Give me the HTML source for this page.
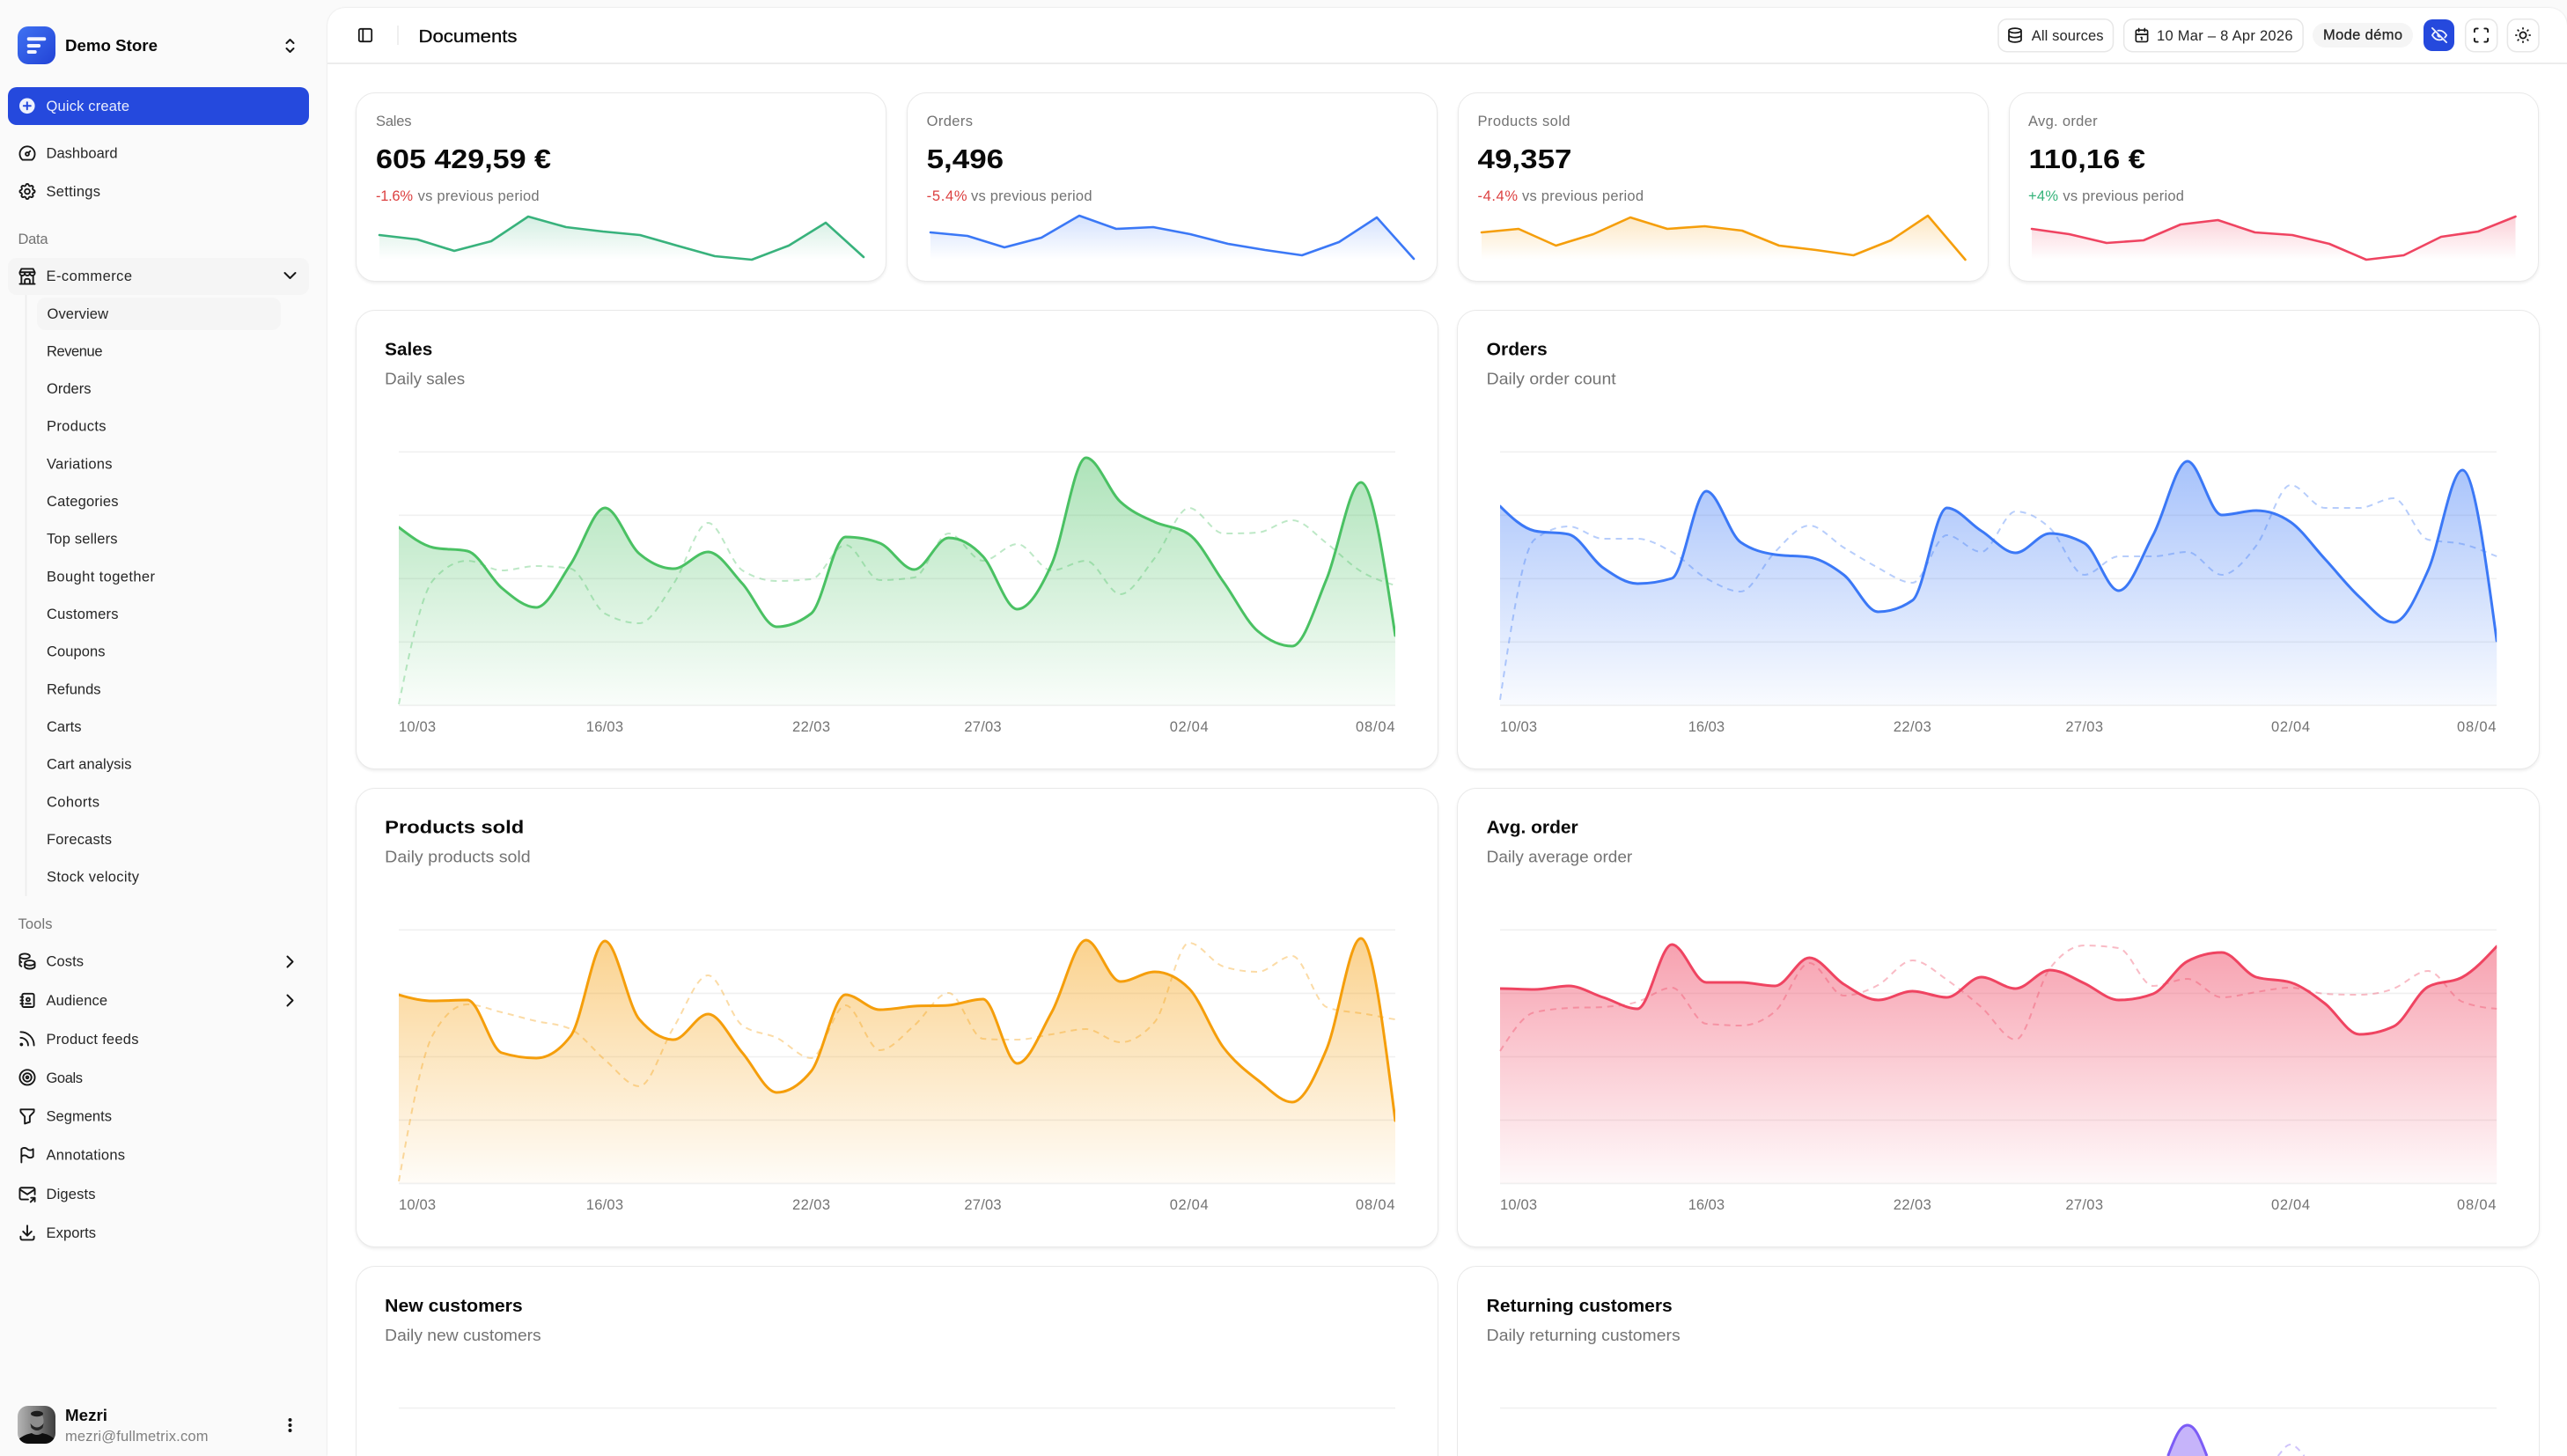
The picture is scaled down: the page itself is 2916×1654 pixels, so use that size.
<!DOCTYPE html>
<html lang="en"><head><meta charset="utf-8"><title>Documents</title>
<style>
html,body{margin:0;padding:0;width:2916px;height:1654px;overflow:hidden;background:#fafafa}
#app{position:absolute;left:0;top:0;width:2916px;height:1654px;overflow:hidden;background:#fafafa}
.main{position:absolute;left:372px;top:9px;width:2544px;height:1645px;background:#fff;border-radius:20px 20px 0 0;box-shadow:0 0 2px rgba(0,0,0,.12)}
.hl{position:absolute;left:372px;top:71px;width:2544px;height:2px;background:#ececec}
.c{position:absolute;box-sizing:border-box;background:#fff;border:1.5px solid #e9e9e9;border-radius:22px;box-shadow:0 2px 3px rgba(0,0,0,.07)}
.k{top:105px;height:215px;width:602.5px}
.b{height:521.5px;width:1230px}
.e{height:216px;border-bottom:0;border-radius:22px 22px 0 0;box-shadow:none}
svg{position:absolute;left:0;top:0;display:block;width:2916px;height:1654px;overflow:hidden}
text{font-family:"Liberation Sans",sans-serif;font-size:16.5px;fill:#262626}
.g{fill:#737373}
.n{font-size:31px;font-weight:700;fill:#0a0a0a}
.h{font-size:20.5px;font-weight:700;fill:#0a0a0a}
.s{font-size:18.5px;fill:#737373}
.m{stroke:#171717;stroke-width:.25}
.i{fill:none;stroke:#171717;stroke-width:2;stroke-linecap:round;stroke-linejoin:round}
.v{vector-effect:non-scaling-stroke}
.l{stroke-width:3;stroke-linejoin:round}
.d{fill:none;stroke-width:2;stroke-dasharray:7 6;opacity:.36}
.gr{stroke:#f0f0f0;stroke-width:1.6}
.sp{fill:none;stroke-width:2.6;stroke-linejoin:round;stroke-linecap:round}
</style></head><body>
<div id="app">
<div class="main"></div><div class="hl"></div>
<div class="c k" style="left:404px;width:603px"></div><div class="c k" style="left:1030.3px"></div><div class="c k" style="left:1656px"></div><div class="c k" style="left:2281.5px"></div>
<div class="c b" style="left:404px;top:352px"></div><div class="c b" style="left:1655px;top:352px;width:1229.5px"></div>
<div class="c b" style="left:404px;top:895px"></div><div class="c b" style="left:1655px;top:895px;width:1229.5px"></div>
<div class="c b e" style="left:404px;top:1438px"></div><div class="c b e" style="left:1655px;top:1438px;width:1229.5px"></div>
<svg width="2916" height="1654" viewBox="0 0 2916 1654" xmlns="http://www.w3.org/2000/svg">
<defs>
<linearGradient id="lg" x1="0" y1="0" x2="1" y2="1"><stop offset="0" stop-color="#3f72f2"/><stop offset="1" stop-color="#2243d6"/></linearGradient>
<linearGradient id="av" x1="0" y1="0" x2="1" y2="0"><stop offset="0" stop-color="#b5b5b5"/><stop offset=".55" stop-color="#777"/><stop offset="1" stop-color="#3c3c3c"/></linearGradient>
<clipPath id="avc"><rect x="20" y="1597" width="43" height="43" rx="12"/></clipPath>
<linearGradient id="ag" gradientUnits="userSpaceOnUse" x1="0" x2="0" y1="520" y2="801"><stop offset="0" stop-color="#4ac163" stop-opacity=".45"/><stop offset="1" stop-color="#4ac163" stop-opacity=".03"/></linearGradient>
<linearGradient id="ab" gradientUnits="userSpaceOnUse" x1="0" x2="0" y1="524" y2="801"><stop offset="0" stop-color="#3b78f6" stop-opacity=".45"/><stop offset="1" stop-color="#3b78f6" stop-opacity=".03"/></linearGradient>
<linearGradient id="aa" gradientUnits="userSpaceOnUse" x1="0" x2="0" y1="1066" y2="1344"><stop offset="0" stop-color="#f59e0b" stop-opacity=".46"/><stop offset="1" stop-color="#f59e0b" stop-opacity=".03"/></linearGradient>
<linearGradient id="ar" gradientUnits="userSpaceOnUse" x1="0" x2="0" y1="1073" y2="1344"><stop offset="0" stop-color="#ef4461" stop-opacity=".5"/><stop offset="1" stop-color="#ef4461" stop-opacity=".03"/></linearGradient>
<linearGradient id="sg" x1="0" y1="0" x2="0" y2="1"><stop offset="0" stop-color="#38b27c" stop-opacity=".22"/><stop offset="1" stop-color="#38b27c" stop-opacity="0"/></linearGradient>
<linearGradient id="sb" x1="0" y1="0" x2="0" y2="1"><stop offset="0" stop-color="#3b78f6" stop-opacity=".22"/><stop offset="1" stop-color="#3b78f6" stop-opacity="0"/></linearGradient>
<linearGradient id="sa" x1="0" y1="0" x2="0" y2="1"><stop offset="0" stop-color="#f59e0b" stop-opacity=".25"/><stop offset="1" stop-color="#f59e0b" stop-opacity="0"/></linearGradient>
<linearGradient id="sr" x1="0" y1="0" x2="0" y2="1"><stop offset="0" stop-color="#ef4461" stop-opacity=".25"/><stop offset="1" stop-color="#ef4461" stop-opacity="0"/></linearGradient>
<clipPath id="c1"><rect x="0" y="0" width="87" height="801"/></clipPath>
<clipPath id="c2"><rect x="0" y="0" width="87" height="1344"/></clipPath>
<clipPath id="c3"><rect x="0" y="0" width="87" height="1654"/></clipPath>
</defs>

<!-- sidebar header -->
<rect x="20" y="30" width="43" height="43" rx="12" fill="url(#lg)"/>
<rect x="30.7" y="42.3" width="21.6" height="4" rx="2" fill="#f3f5ff"/><rect x="30.7" y="50" width="15.4" height="4" rx="2" fill="#f3f5ff"/><rect x="30.7" y="57" width="11" height="4" rx="2" fill="#f3f5ff"/>
<text x="74" y="58" textLength="105" lengthAdjust="spacingAndGlyphs" style="font-size:18px;font-weight:700;fill:#0a0a0a">Demo Store</text>
<g class="i" transform="translate(317.5,40)"><path d="M8 9l4 -4l4 4M16 15l-4 4l-4 -4"/></g>

<rect x="9" y="99" width="342" height="43" rx="10" fill="#2549dd"/>
<circle cx="30.8" cy="120.3" r="8.8" fill="#eef1fd"/><path d="M30.8 116.3v8M26.8 120.3h8" stroke="#2549dd" stroke-width="2" stroke-linecap="round"/>
<text x="52.5" y="126" textLength="94.5" style="fill:#e9edfc">Quick create</text>

<g class="i" transform="translate(19.6,162.6) scale(.95)"><path d="M12 13m-2 0a2 2 0 1 0 4 0a2 2 0 1 0 -4 0M13.45 11.55l2.05 -2.05M6.4 20a9 9 0 1 1 11.2 0z"/></g>
<text x="52.5" y="179.5" textLength="81">Dashboard</text>
<g class="i" transform="translate(19.6,206.1) scale(.95)"><path d="M10.325 4.317c.426 -1.756 2.924 -1.756 3.35 0a1.724 1.724 0 0 0 2.573 1.066c1.543 -.94 3.31 .826 2.37 2.37a1.724 1.724 0 0 0 1.065 2.572c1.756 .426 1.756 2.924 0 3.35a1.724 1.724 0 0 0 -1.066 2.573c.94 1.543 -.826 3.31 -2.37 2.37a1.724 1.724 0 0 0 -2.572 1.065c-.426 1.756 -2.924 1.756 -3.35 0a1.724 1.724 0 0 0 -2.573 -1.066c-1.543 .94 -3.31 -.826 -2.37 -2.37a1.724 1.724 0 0 0 -1.065 -2.572c-1.756 -.426 -1.756 -2.924 0 -3.35a1.724 1.724 0 0 0 1.066 -2.573c-.94 -1.543 .826 -3.31 2.37 -2.37c1 .608 2.296 .07 2.572 -1.065z"/><circle cx="12" cy="12" r="3"/></g>
<text x="52.5" y="223" textLength="61.5">Settings</text>

<text class="g" x="20.5" y="277" textLength="34">Data</text>
<rect x="9" y="293" width="342" height="42" rx="10" fill="#f5f5f5"/>
<g class="i" transform="translate(19.6,302.6) scale(.95)"><path d="M3 21l18 0M3 7v1a3 3 0 0 0 6 0v-1m0 1a3 3 0 0 0 6 0v-1m0 1a3 3 0 0 0 6 0v-1h-18l2 -4h14l2 4M5 21l0 -10.15M19 21l0 -10.15M9 21v-4a2 2 0 0 1 2 -2h2a2 2 0 0 1 2 2v4"/></g>
<text x="52.5" y="319" textLength="97.5">E-commerce</text>
<g class="i" transform="translate(317.5,301)"><path d="M6 9l6 6l6 -6"/></g>
<rect x="28.7" y="335" width="1.6" height="683" fill="#ececec"/>
<rect x="42" y="338" width="277" height="37" rx="10" fill="#f5f5f5"/>
<text x="53.5" y="362" textLength="69.5">Overview</text>
<text x="53" y="404.5" textLength="63.5">Revenue</text>
<text x="53" y="447" textLength="50.5">Orders</text>
<text x="53" y="489.5" textLength="67.5">Products</text>
<text x="53" y="532.5" textLength="74.5">Variations</text>
<text x="53" y="575" textLength="81.5">Categories</text>
<text x="53" y="617.5" textLength="80.5">Top sellers</text>
<text x="53" y="660.3" textLength="123">Bought together</text>
<text x="53" y="703" textLength="81.5">Customers</text>
<text x="53" y="745.5" textLength="66.5">Coupons</text>
<text x="53" y="788.3" textLength="61.5">Refunds</text>
<text x="53" y="831" textLength="39.5">Carts</text>
<text x="53" y="873.5" textLength="96.5">Cart analysis</text>
<text x="53" y="916.3" textLength="60">Cohorts</text>
<text x="53" y="959" textLength="74">Forecasts</text>
<text x="53" y="1001.5" textLength="105">Stock velocity</text>

<text class="g" x="20.5" y="1055" textLength="39">Tools</text>
<g class="i" transform="translate(19.6,1080.6) scale(.95)"><path d="M9 14c0 1.657 2.686 3 6 3s6 -1.343 6 -3s-2.686 -3 -6 -3s-6 1.343 -6 3zM9 14v4c0 1.656 2.686 3 6 3s6 -1.344 6 -3v-4M3 6c0 1.072 1.144 2.062 3 2.598s4.144 .536 6 0c1.856 -.536 3 -1.526 3 -2.598c0 -1.072 -1.144 -2.062 -3 -2.598s-4.144 -.536 -6 0c-1.856 .536 -3 1.526 -3 2.598zM3 6v10c0 .888 .772 1.45 2 2M3 11c0 .888 .772 1.45 2 2"/></g>
<text x="52.5" y="1097.7" textLength="42.5">Costs</text>
<g class="i" transform="translate(317.5,1080.5)"><path d="M9 6l6 6l-6 6"/></g>
<g class="i" transform="translate(19.6,1125) scale(.95)"><path d="M20 6v12a2 2 0 0 1 -2 2h-10a2 2 0 0 1 -2 -2v-12a2 2 0 0 1 2 -2h10a2 2 0 0 1 2 2zM10 16h6M13 11m-2 0a2 2 0 1 0 4 0a2 2 0 1 0 -4 0M4 8h3M4 12h3M4 16h3"/></g>
<text x="52.5" y="1141.8" textLength="69.5">Audience</text>
<g class="i" transform="translate(317.5,1124.5)"><path d="M9 6l6 6l-6 6"/></g>
<g class="i" transform="translate(19.6,1168.5) scale(.95)"><path d="M5 19m-1 0a1 1 0 1 0 2 0a1 1 0 1 0 -2 0M4 4a16 16 0 0 1 16 16M4 11a9 9 0 0 1 9 9"/></g>
<text x="52.5" y="1185.8" textLength="105">Product feeds</text>
<g class="i" transform="translate(19.6,1212.5) scale(.95)"><circle cx="12" cy="12" r="1.4"/><circle cx="12" cy="12" r="5"/><circle cx="12" cy="12" r="9"/></g>
<text x="52.5" y="1229.8" textLength="41.5">Goals</text>
<g class="i" transform="translate(19.6,1256.5) scale(.95)"><path d="M4 4h16v2.172a2 2 0 0 1 -.586 1.414l-4.414 4.414v7l-6 2v-8.5l-4.48 -4.928a2 2 0 0 1 -.52 -1.345v-2.227z"/></g>
<text x="52.5" y="1273.5" textLength="74.5">Segments</text>
<g class="i" transform="translate(19.6,1300.5) scale(.95)"><path d="M5 5a5 5 0 0 1 7 0a5 5 0 0 0 7 0v9a5 5 0 0 1 -7 0a5 5 0 0 0 -7 0v-9zM5 21v-7"/></g>
<text x="52.5" y="1317.5" textLength="89.5">Annotations</text>
<g class="i" transform="translate(19.6,1344.5) scale(.95)"><path d="M13 19h-8a2 2 0 0 1 -2 -2v-10a2 2 0 0 1 2 -2h14a2 2 0 0 1 2 2v6M3 7l9 6l9 -6M16 22l5 -5M21 21.5v-4.5h-4.5"/></g>
<text x="52.5" y="1361.8" textLength="56">Digests</text>
<g class="i" transform="translate(19.6,1388.5) scale(.95)"><path d="M4 17v2a2 2 0 0 0 2 2h12a2 2 0 0 0 2 -2v-2M7 11l5 5l5 -5M12 4l0 12"/></g>
<text x="52.5" y="1405.8" textLength="56.5">Exports</text>

<g clip-path="url(#avc)"><rect x="20" y="1597" width="43" height="43" fill="url(#av)"/>
<ellipse cx="42" cy="1614" rx="7.5" ry="10" fill="#8c8c8c"/><ellipse cx="42" cy="1606" rx="7" ry="3.2" fill="#1d1d1d"/><path d="M34.5 1617q7.5 9 15 0l-1 5q-6.5 6-13 0z" fill="#262626"/>
<path d="M20 1640v-4q6-6 16-8 6 4 12 0 10 2 15 8v4z" fill="#0e0e0e"/></g>
<text x="74" y="1614" textLength="48" lengthAdjust="spacingAndGlyphs" style="font-size:18px;font-weight:700;fill:#0a0a0a">Mezri</text>
<text x="74" y="1637" textLength="162.5" style="fill:#808080">mezri@fullmetrix.com</text>
<circle cx="329.5" cy="1613" r="2" fill="#171717"/><circle cx="329.5" cy="1619" r="2" fill="#171717"/><circle cx="329.5" cy="1625" r="2" fill="#171717"/>

<!-- header -->
<g class="i" transform="translate(404.2,29.2) scale(.9)"><path d="M4 4m0 2a2 2 0 0 1 2 -2h12a2 2 0 0 1 2 2v12a2 2 0 0 1 -2 2h-12a2 2 0 0 1 -2 -2zM9 4l0 16"/></g>
<rect x="451.3" y="29" width="1.4" height="22" fill="#e8e8e8"/>
<text x="475.5" y="48" textLength="112" lengthAdjust="spacingAndGlyphs" style="font-size:20.5px;fill:#0a0a0a;stroke:#0a0a0a;stroke-width:.3">Documents</text>

<rect x="2270" y="21.7" width="130.5" height="37" rx="10" fill="#fff" stroke="#e7e7e7" stroke-width="1.5"/>
<g class="i" transform="translate(2278.5,29.5) scale(.875)"><path d="M12 6m-8 0a8 3 0 1 0 16 0a8 3 0 1 0 -16 0M4 6v6a8 3 0 0 0 16 0v-6M4 12v6a8 3 0 0 0 16 0v-6"/></g>
<text x="2307.8" y="46" textLength="81.7">All sources</text>
<rect x="2412.6" y="21.7" width="203.5" height="37" rx="10" fill="#fff" stroke="#e7e7e7" stroke-width="1.5"/>
<g class="i" transform="translate(2423,30) scale(.83)"><path d="M4 7a2 2 0 0 1 2 -2h12a2 2 0 0 1 2 2v12a2 2 0 0 1 -2 2h-12a2 2 0 0 1 -2 -2v-12zM16 3v4M8 3v4M4 11h16M11 15h1M12 15v3"/></g>
<text x="2450" y="46" textLength="154.5">10 Mar – 8 Apr 2026</text>
<rect x="2627" y="26" width="114" height="28" rx="14" fill="#f5f5f5"/>
<text class="m" x="2639" y="45" textLength="90">Mode démo</text>
<rect x="2753" y="22" width="35" height="36" rx="10" fill="#2549dd"/>
<g class="i" transform="translate(2760.2,29.2) scale(.9)" style="stroke:#eef1fd"><path d="M10.585 10.587a2 2 0 0 0 2.829 2.828M16.681 16.673a8.717 8.717 0 0 1 -4.681 1.327c-3.6 0 -6.6 -2 -9 -6c1.272 -2.12 2.712 -3.678 4.32 -4.674m2.86 -1.146a9.055 9.055 0 0 1 1.82 -.18c3.6 0 6.6 2 9 6c-.666 1.11 -1.379 2.067 -2.138 2.87M3 3l18 18"/></g>
<rect x="2800.7" y="21.7" width="36" height="37" rx="10" fill="#fff" stroke="#e7e7e7" stroke-width="1.5"/>
<g class="i" transform="translate(2807.1,28.6) scale(.95)"><path d="M4 8v-2a2 2 0 0 1 2 -2h2M4 16v2a2 2 0 0 0 2 2h2M16 4h2a2 2 0 0 1 2 2v2M16 20h2a2 2 0 0 0 2 -2v-2"/></g>
<rect x="2848.4" y="21.7" width="35.6" height="37" rx="10" fill="#fff" stroke="#e7e7e7" stroke-width="1.5"/>
<g class="i" transform="translate(2855.2,29.2) scale(.9)"><path d="M12 12m-4 0a4 4 0 1 0 8 0a4 4 0 1 0 -8 0M3 12h1m8 -9v1m8 8h1m-9 8v1m-6.4 -15.4l.7 .7m12.1 -.7l-.7 .7m0 11.4l.7 .7m-12.1 -.7l-.7 .7"/></g>

<!-- KPI -->
<text class="g" x="427" y="143" textLength="40.5">Sales</text>
<text class="n" x="427" y="191" textLength="199" lengthAdjust="spacingAndGlyphs">605 429,59 €</text>
<text x="427" y="228" textLength="42" style="fill:#dc4040">-1.6%</text>
<text class="g" x="474.6" y="228" textLength="138">vs previous period</text>
<polygon fill="url(#sg)" points="431,267 474,272 516,285 558,274 600,246 643,258 685,263 727,267 769,279 812,291 854,295 896,279 938,253 981,292 981,295 431,295"/>
<polyline class="sp" stroke="#38b27c" points="431,267 474,272 516,285 558,274 600,246 643,258 685,263 727,267 769,279 812,291 854,295 896,279 938,253 981,292"/>

<text class="g" x="1052.6" y="143" textLength="52.4">Orders</text>
<text class="n" x="1052.6" y="191" textLength="87.5" lengthAdjust="spacingAndGlyphs">5,496</text>
<text x="1052.6" y="228" textLength="46" style="fill:#dc4040">-5.4%</text>
<text class="g" x="1103" y="228" textLength="137.5">vs previous period</text>
<polygon fill="url(#sb)" points="1057,264 1099,268 1141,281 1183,270 1226,245 1268,260 1310,258 1352,266 1395,277 1437,284 1479,290 1521,275 1564,247 1606,294 1606,295 1057,295"/>
<polyline class="sp" stroke="#3b78f6" points="1057,264 1099,268 1141,281 1183,270 1226,245 1268,260 1310,258 1352,266 1395,277 1437,284 1479,290 1521,275 1564,247 1606,294"/>

<text class="g" x="1678.5" y="143" textLength="105">Products sold</text>
<text class="n" x="1678.5" y="191" textLength="107" lengthAdjust="spacingAndGlyphs">49,357</text>
<text x="1678.5" y="228" textLength="45.5" style="fill:#dc4040">-4.4%</text>
<text class="g" x="1729" y="228" textLength="138">vs previous period</text>
<polygon fill="url(#sa)" points="1683,264 1725,260 1767.5,279 1810,266 1852,247 1894,260 1936.5,257 1979,262 2021,279 2063,284 2105.5,290 2148,273 2190,245 2232.5,295 1683,295"/>
<polyline class="sp" stroke="#f59e0b" points="1683,264 1725,260 1767.5,279 1810,266 1852,247 1894,260 1936.5,257 1979,262 2021,279 2063,284 2105.5,290 2148,273 2190,245 2232.5,295"/>

<text class="g" x="2304" y="143" textLength="78.6">Avg. order</text>
<text class="n" x="2304.5" y="191" textLength="132.5" lengthAdjust="spacingAndGlyphs">110,16 €</text>
<text x="2304" y="228" textLength="34" style="fill:#34b37a">+4%</text>
<text class="g" x="2343.4" y="228" textLength="137.5">vs previous period</text>
<polygon fill="url(#sr)" points="2308,260 2350.5,266 2393,276 2435,273 2477,255 2519.5,250 2561.5,264 2604,267 2646,277 2688,295 2730.5,290 2773,269 2815,263 2857.5,246 2857.5,295 2308,295"/>
<polyline class="sp" stroke="#ef4461" points="2308,260 2350.5,266 2393,276 2435,273 2477,255 2519.5,250 2561.5,264 2604,267 2646,277 2688,295 2730.5,290 2773,269 2815,263 2857.5,246"/>

<!-- chart titles -->
<text class="h" x="437.2" y="403.5" textLength="54" lengthAdjust="spacingAndGlyphs">Sales</text>
<text class="s" x="437.2" y="436.5" textLength="91" lengthAdjust="spacingAndGlyphs">Daily sales</text>
<text class="h" x="1688.7" y="403.5" textLength="69" lengthAdjust="spacingAndGlyphs">Orders</text>
<text class="s" x="1688.7" y="436.5" textLength="147" lengthAdjust="spacingAndGlyphs">Daily order count</text>
<text class="h" x="437.2" y="946.5" textLength="158" lengthAdjust="spacingAndGlyphs">Products sold</text>
<text class="s" x="437.2" y="979.5" textLength="165.5" lengthAdjust="spacingAndGlyphs">Daily products sold</text>
<text class="h" x="1688.7" y="946.5" textLength="104" lengthAdjust="spacingAndGlyphs">Avg. order</text>
<text class="s" x="1688.7" y="979.5" textLength="165.5" lengthAdjust="spacingAndGlyphs">Daily average order</text>
<text class="h" x="437.2" y="1490" textLength="156.5" lengthAdjust="spacingAndGlyphs">New customers</text>
<text class="s" x="437.2" y="1523" textLength="177.5" lengthAdjust="spacingAndGlyphs">Daily new customers</text>
<text class="h" x="1688.7" y="1490" textLength="211" lengthAdjust="spacingAndGlyphs">Returning customers</text>
<text class="s" x="1688.7" y="1523" textLength="220" lengthAdjust="spacingAndGlyphs">Daily returning customers</text>

<!-- grids -->
<path class="gr" d="M453 513.3H1585M453 585.3H1585M453 657.3H1585M453 729.3H1585M453 801.3H1585M453 1056.3H1585M453 1128.4H1585M453 1200.5H1585M453 1272.4H1585M453 1344.4H1585M453 1599.5H1585"/>
<path class="gr" d="M1704 513.3H2836M1704 585.3H2836M1704 657.3H2836M1704 729.3H2836M1704 801.3H2836M1704 1056.3H2836M1704 1128.4H2836M1704 1200.5H2836M1704 1272.4H2836M1704 1344.4H2836M1704 1599.5H2836"/>

<!-- Sales -->
<g transform="translate(453,0) scale(13.011,1)">
<path class="v l" clip-path="url(#c1)" fill="url(#ag)" stroke="#4ac163" d="M-3 900V599H0C1 609 2 619 3 622S5 623 6 626S8 657 9 668S11 690 12 690S14 660 15 641S17 577 18 577S20 618 21 629S23 646 24 646S26 627 27 627S29 649 30 663S32 712 33 712S35 707 36 697S38 610 39 610S41 612 42 617S44 647 45 647S47 611 48 611S50 618 51 632S53 692 54 692S56 670 57 641S59 520 60 520S62 558 63 570S65 587 66 593S68 598 69 607S71 643 72 661S74 706 75 717S77 734 78 734S80 689 81 658S83 548 84 548S86 635 87 722H90V900Z"/>
<path class="v d" stroke="#4ac163" d="M0 800C1 737 2 674 3 659S5 637 6 637S8 648 9 648S11 643 12 643S14 644 15 646S17 690 18 697S20 708 21 708S23 682 24 663S26 594 27 594S29 640 30 648S32 660 33 660S35 659 36 658S38 619 39 619S41 659 42 659S44 658 45 656S47 606 48 606S50 637 51 637S53 618 54 618S56 648 57 648S59 637 60 637S62 675 63 675S65 650 66 634S68 577 69 577S71 606 72 606S74 606 75 605S77 591 78 591S80 607 81 617S83 641 84 649S86 661 87 665"/>
</g>
<!-- Orders -->
<g transform="translate(1704,0) scale(13.014,1)">
<path class="v l" clip-path="url(#c1)" fill="url(#ab)" stroke="#3b78f6" d="M-3 900V575H0C1 588 2 600 3 603S5 604 6 607S8 636 9 645S11 663 12 663S14 661 15 657S17 558 18 558S20 607 21 616S23 628 24 630S26 631 27 633S29 643 30 653S32 695 33 695S35 691 36 682S38 577 39 577S41 595 42 603S44 628 45 628S47 606 48 606S50 610 51 617S53 671 54 671S56 632 57 608S59 524 60 524S62 585 63 585S65 580 66 580S68 584 69 593S71 621 72 635S74 666 75 678S77 707 78 707S80 677 81 648S83 534 84 534S86 631 87 728H90V900Z"/>
<path class="v d" stroke="#3b78f6" d="M0 795C1 709 2 623 3 613S5 598 6 598S8 612 9 612S11 612 12 612S14 620 15 627S17 650 18 657S20 672 21 672S23 640 24 627S26 597 27 597S29 614 30 622S32 638 33 645S35 662 36 662S38 608 39 608S41 627 42 627S44 581 45 581S47 588 48 600S50 653 51 653S53 632 54 632S56 632 57 632S59 627 60 627S62 653 63 653S65 637 66 620S68 551 69 551S71 577 72 577S74 577 75 577S77 566 78 566S80 610 81 613S83 615 84 618S86 627 87 632"/>
</g>
<!-- Products -->
<g transform="translate(453,0) scale(13.011,1)">
<path class="v l" clip-path="url(#c2)" fill="url(#aa)" stroke="#f59e0b" d="M-3 1500V1130H0C1 1134 2 1137 3 1137S5 1136 6 1136S8 1192 9 1196S11 1202 12 1202S14 1194 15 1177S17 1069 18 1069S20 1143 21 1158S23 1181 24 1181S26 1152 27 1152S29 1181 30 1196S32 1241 33 1241S35 1233 36 1217S38 1130 39 1130S41 1147 42 1147S44 1144 45 1143S47 1143 48 1142S50 1135 51 1135S53 1208 54 1208S56 1173 57 1150S59 1068 60 1068S62 1115 63 1115S65 1104 66 1104S68 1110 69 1123S71 1173 72 1190S74 1217 75 1227S77 1252 78 1252S80 1223 81 1192S83 1066 84 1066S86 1170 87 1273H90V1500Z"/>
<path class="v d" stroke="#f59e0b" d="M0 1342C1 1270 2 1198 3 1175S5 1141 6 1141S8 1147 9 1150S11 1157 12 1160S14 1163 15 1169S17 1193 18 1204S20 1234 21 1234S23 1188 24 1167S26 1108 27 1108S29 1156 30 1165S32 1173 33 1179S35 1202 36 1202S38 1142 39 1142S41 1193 42 1193S44 1176 45 1165S47 1128 48 1128S50 1179 51 1180S53 1181 54 1181S56 1177 57 1175S59 1169 60 1169S62 1184 63 1184S65 1176 66 1161S68 1071 69 1071S71 1094 72 1098S74 1104 75 1104S77 1086 78 1086S80 1139 81 1144S83 1149 84 1151S86 1156 87 1158"/>
</g>
<!-- Avg order -->
<g transform="translate(1704,0) scale(13.014,1)">
<path class="v l" clip-path="url(#c2)" fill="url(#ar)" stroke="#ef4461" d="M-3 1500V1123H0C1 1123 2 1124 3 1124S5 1120 6 1120S8 1129 9 1133S11 1146 12 1146S14 1073 15 1073S17 1116 18 1116S20 1116 21 1116S23 1120 24 1120S26 1088 27 1088S29 1110 30 1118S32 1136 33 1136S35 1126 36 1126S38 1133 39 1133S41 1110 42 1110S44 1123 45 1123S47 1102 48 1102S50 1111 51 1117S53 1136 54 1136S56 1134 57 1129S59 1099 60 1092S62 1082 63 1082S65 1106 66 1110S68 1112 69 1116S71 1130 72 1140S74 1175 75 1175S77 1172 78 1166S80 1128 81 1121S83 1117 84 1110S86 1089 87 1075H90V1500Z"/>
<path class="v d" stroke="#ef4461" d="M0 1194C1 1174 2 1153 3 1150S5 1146 6 1145S8 1145 9 1144S11 1142 12 1138S14 1122 15 1122S17 1162 18 1163S20 1165 21 1165S23 1160 24 1149S26 1094 27 1094S29 1131 30 1131S32 1126 33 1119S35 1091 36 1091S38 1104 39 1113S41 1133 42 1144S44 1181 45 1181S47 1117 48 1100S50 1074 51 1074S53 1075 54 1077S56 1120 57 1120S59 1112 60 1112S62 1133 63 1133S65 1129 66 1127S68 1122 69 1122S71 1128 72 1129S74 1130 75 1130S77 1128 78 1123S80 1103 81 1103S83 1133 84 1138S86 1145 87 1146"/>
</g>
<!-- Returning customers visible peak -->
<g transform="translate(1704,0) scale(13.014,1)" clip-path="url(#c3)">
<path class="v l" fill="#c6b4fa" stroke="#7c5cf6" d="M58.3 1654C59 1630 59.4 1619 60 1619C60.6 1619 61 1630 61.7 1654"/>
<path class="v d" stroke="#7c5cf6" d="M67.9 1654C68.3 1648 68.6 1641 69 1641C69.4 1641 69.8 1648 70.2 1654"/>
</g>

<!-- x labels -->
<text class="g" x="453" y="831" textLength="42">10/03</text><text class="g" x="665.8" y="831" textLength="42.2">16/03</text><text class="g" x="900" y="831" textLength="43">22/03</text><text class="g" x="1095.4" y="831" textLength="42.2">27/03</text><text class="g" x="1328.7" y="831" textLength="44">02/04</text><text class="g" x="1540" y="831" textLength="44.5">08/04</text>
<text class="g" x="1704" y="831" textLength="42">10/03</text><text class="g" x="1917.7" y="831" textLength="41.3">16/03</text><text class="g" x="2150.8" y="831" textLength="43">22/03</text><text class="g" x="2346.4" y="831" textLength="42.6">27/03</text><text class="g" x="2580" y="831" textLength="44">02/04</text><text class="g" x="2791" y="831" textLength="44.5">08/04</text>
<text class="g" x="453" y="1374" textLength="42">10/03</text><text class="g" x="665.8" y="1374" textLength="42.2">16/03</text><text class="g" x="900" y="1374" textLength="43">22/03</text><text class="g" x="1095.4" y="1374" textLength="42.2">27/03</text><text class="g" x="1328.7" y="1374" textLength="44">02/04</text><text class="g" x="1540" y="1374" textLength="44.5">08/04</text>
<text class="g" x="1704" y="1374" textLength="42">10/03</text><text class="g" x="1917.7" y="1374" textLength="41.3">16/03</text><text class="g" x="2150.8" y="1374" textLength="43">22/03</text><text class="g" x="2346.4" y="1374" textLength="42.6">27/03</text><text class="g" x="2580" y="1374" textLength="44">02/04</text><text class="g" x="2791" y="1374" textLength="44.5">08/04</text>
</svg>
</div>
</body></html>
